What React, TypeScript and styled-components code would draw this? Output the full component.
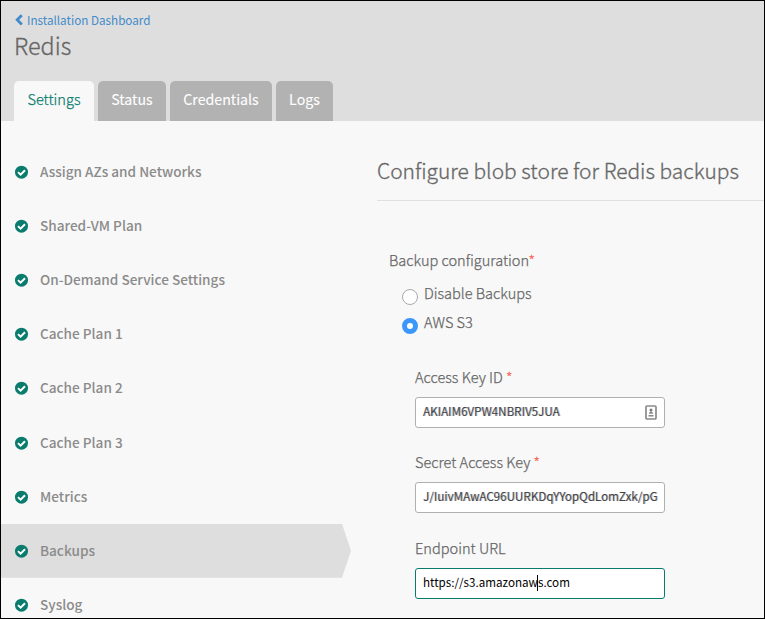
import styled, { createGlobalStyle, css } from "styled-components";

const teal = "#0a7c6e";
const muted = "#8b8b8b";
const ink = "#666";

const GlobalStyle = createGlobalStyle`
  * { box-sizing: border-box; }
  body { margin: 0; background: #f8f8f8; }
`;

const Window = styled.div`
  display: flex;
  flex-direction: column;
  width: 765px;
  height: 619px;
  overflow: hidden;
  border: 1px solid #000;
  background: #f8f8f8;
  color: ${ink};
  font-family: "Noto Sans CJK SC", "Noto Sans", sans-serif;
`;

const Header = styled.header`
  display: flex;
  flex-direction: column;
  height: 120px;
  flex: none;
  padding: 9px 13px 0;
  background: #dedede;
`;

const BackLink = styled.a`
  display: flex;
  align-items: center;
  gap: 4px;
  height: 20px;
  padding-left: 1px;
  color: #428bca;
  font-size: 11.7px;
  line-height: 20px;
`;

const PageTitle = styled.h1`
  margin: 0;
  height: 32px;
  font-size: 23.4px;
  font-weight: 300;
  line-height: 30px;
  -webkit-text-stroke: 0.3px ${ink};
`;

const Tabs = styled.nav`
  display: flex;
  gap: 4px;
  height: 40px;
  margin-top: auto;
`;

const Tab = styled.a<{ $width: number; $active?: boolean }>`
  width: ${(p) => p.$width}px;
  border-radius: 5px 5px 0 0;
  background: ${(p) => (p.$active ? "#f8f8f8" : "#b2b2b2")};
  color: ${(p) => (p.$active ? teal : "#fff")};
  font-size: ${(p) => (p.$active ? 14.6 : 14.2)}px;
  font-weight: ${(p) => (p.$active ? 300 : 400)};
  line-height: 36px;
  text-align: center;
  white-space: nowrap;
  -webkit-text-stroke: ${(p) => (p.$active ? `0.25px ${teal}` : "0.1px #fff")};
`;

const Body = styled.main`
  display: flex;
  flex: 1;
  min-height: 0;
`;

const Sidebar = styled.ul`
  width: 350px;
  flex: none;
  margin: 0;
  padding: 24px 0 0;
  list-style: none;
`;

const NavItem = styled.li<{ $current?: boolean }>`
  display: flex;
  align-items: center;
  gap: 12px;
  height: 54.1px;
  padding-left: 14px;
  color: ${muted};
  font-size: 13.58px;
  font-weight: 500;
  ${(p) =>
    p.$current &&
    css`
      background: #dedede;
      clip-path: polygon(0 0, 341px 0, 100% 50%, 341px 100%, 0 100%);
    `}
`;

const NavLabel = styled.span`
  padding-bottom: 2px;
  line-height: 20px;
  white-space: nowrap;
`;

const Content = styled.section`
  flex: 1;
  min-width: 0;
  padding-left: 26px;
`;

const SectionTitle = styled.h2`
  margin: 0;
  height: 80px;
  padding-top: 33px;
  border-bottom: 1px solid #e0e0e0;
  font-size: 20.95px;
  font-weight: 300;
  line-height: 32px;
  white-space: nowrap;
  -webkit-text-stroke: 0.3px ${ink};
`;

const Form = styled.form`
  padding: 48px 0 0 12px;
`;

const labelText = css`
  font-size: 14.55px;
  font-weight: 300;
  line-height: 22px;
  white-space: nowrap;
  -webkit-text-stroke: 0.25px ${ink};
`;

const Legend = styled.div`
  ${labelText}
`;

const Required = styled.span`
  color: #f7685b;
  -webkit-text-stroke: 0.3px #f7685b;
`;

const RadioList = styled.div`
  padding: 11px 0 0 13px;
`;

const RadioRow = styled.label`
  display: flex;
  align-items: flex-start;
  gap: 6px;
  height: 29px;
  ${labelText}
`;

const RadioDot = styled.span<{ $checked?: boolean }>`
  width: 16px;
  height: 16px;
  margin-top: 7px;
  border: 1px solid #a9a9a9;
  border-radius: 50%;
  background: #fff;
  ${(p) => p.$checked && css`border: 5px solid #3c97fb;`}
`;

const Fields = styled.div`
  display: flex;
  flex-direction: column;
  gap: 23.4px;
  padding: 26px 0 0 26px;
`;

const Field = styled.label`
  display: flex;
  flex-direction: column;
  gap: 9px;
  height: 62px;
`;

const FieldLabel = styled.span`
  ${labelText}
`;

const TextBox = styled.div<{ $focused?: boolean }>`
  display: flex;
  align-items: center;
  width: 250px;
  height: 31px;
  flex: none;
  padding: 0 7px;
  border: 1px solid ${(p) => (p.$focused ? teal : "#b0b0b0")};
  border-radius: 3px;
  background: #fff;
  color: #000;
  font-size: 11.64px;
  line-height: 20px;
`;

const Value = styled.span<{ $smudged?: boolean }>`
  flex: 1;
  min-width: 0;
  padding-bottom: 3px;
  white-space: nowrap;
  ${(p) =>
    p.$smudged &&
    css`
      color: #444;
      text-shadow: 1px 0 rgba(70, 70, 90, 0.4);
    `}
`;

const Caret = styled.span`
  display: inline-block;
  width: 1px;
  height: 16px;
  margin: 0 -0.5px;
  background: #000;
  vertical-align: -4px;
`;

const CheckIcon = () => (
  <svg width="13" height="14" viewBox="0 0 13 14">
    <circle cx="6.5" cy="7.2" r="6.5" fill={teal} />
    <path d="M3 7.1 5.6 9.6 10 5.2" fill="none" stroke="#fff" strokeWidth="2" />
  </svg>
);

const ChevronIcon = () => (
  <svg width="8" height="12" viewBox="0 0 8 12">
    <path d="M6.8 1.2 2.2 5.8l4.6 4.6" fill="none" stroke="#428bca" strokeWidth="2.8" />
  </svg>
);

const ContactIcon = () => (
  <svg width="12" height="15" viewBox="0 0 12 15">
    <rect x="1" y="1" width="10" height="13" rx="1" fill="#fff" stroke="#8b8b8b" strokeWidth="1.7" />
    <circle cx="6" cy="5" r="1.5" fill="#777" />
    <path d="M4 8.7c0-3 4-3 4 0zM3.5 10h5v1.4h-5z" fill="#888" />
  </svg>
);

const sections = [
  "Assign AZs and Networks",
  "Shared-VM Plan",
  "On-Demand Service Settings",
  "Cache Plan 1",
  "Cache Plan 2",
  "Cache Plan 3",
  "Metrics",
  "Backups",
  "Syslog",
];

export default function App() {
  return (
    <Window>
      <GlobalStyle />
      <Header>
        <BackLink>
          <ChevronIcon />
          Installation Dashboard
        </BackLink>
        <PageTitle>Redis</PageTitle>
        <Tabs>
          <Tab $width={80} $active>Settings</Tab>
          <Tab $width={68}>Status</Tab>
          <Tab $width={102}>Credentials</Tab>
          <Tab $width={57}>Logs</Tab>
        </Tabs>
      </Header>
      <Body>
        <Sidebar>
          {sections.map((name) => (
            <NavItem key={name} $current={name === "Backups"}>
              <CheckIcon />
              <NavLabel>{name}</NavLabel>
            </NavItem>
          ))}
        </Sidebar>
        <Content>
          <SectionTitle>Configure blob store for Redis backups</SectionTitle>
          <Form>
            <Legend>Backup configuration<Required>*</Required></Legend>
            <RadioList>
              <RadioRow><RadioDot />Disable Backups</RadioRow>
              <RadioRow><RadioDot $checked />AWS S3</RadioRow>
            </RadioList>
            <Fields>
              <Field>
                <FieldLabel>Access Key ID <Required>*</Required></FieldLabel>
                <TextBox>
                  <Value $smudged>AKIAIM6VPW4NBRIV5JUA</Value>
                  <ContactIcon />
                </TextBox>
              </Field>
              <Field>
                <FieldLabel>Secret Access Key <Required>*</Required></FieldLabel>
                <TextBox>
                  <Value $smudged>J/IuivMAwAC96UURKDqYYopQdLomZxk/pG</Value>
                </TextBox>
              </Field>
              <Field>
                <FieldLabel>Endpoint URL</FieldLabel>
                <TextBox $focused>
                  <Value>https://s3.amazonaw<Caret />s.com</Value>
                </TextBox>
              </Field>
            </Fields>
          </Form>
        </Content>
      </Body>
    </Window>
  );
}
